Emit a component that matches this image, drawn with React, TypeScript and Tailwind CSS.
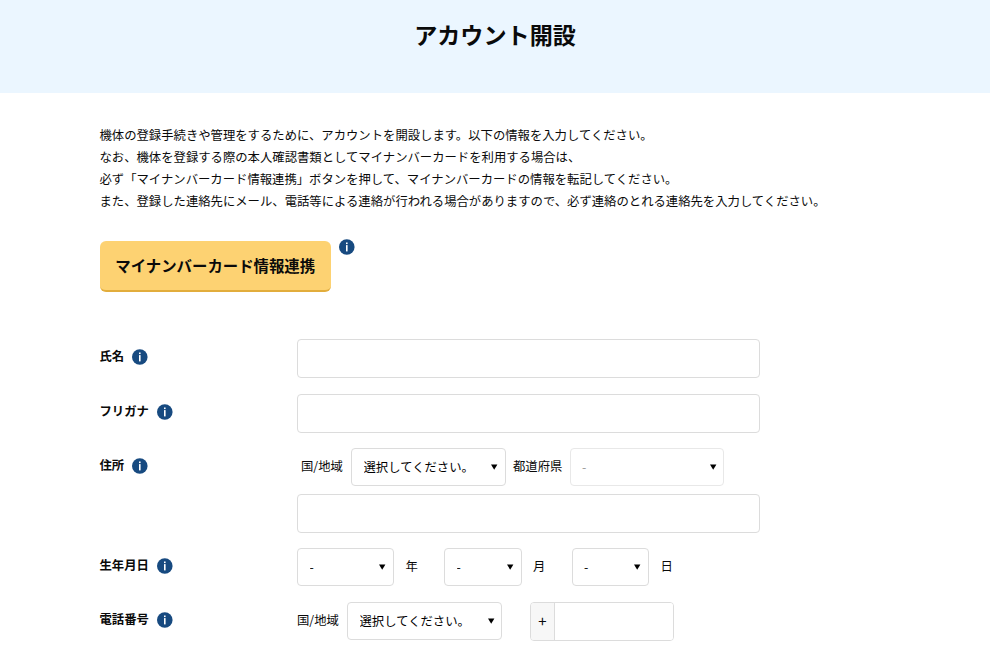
import React from 'react';

interface SelectBoxProps {
  label: string;
  placeholder: string;
  className: string;
  disabled?: boolean;
}

interface FormRowProps {
  label: string;
  className: string;
  children: React.ReactNode;
}

const inputClass = 'block border border-[#dcdcdc] rounded-[4px] bg-white px-3 outline-none';

const InfoIcon: React.FC = () => (
  <svg className="w-4 h-4 shrink-0" viewBox="0 0 16 16" aria-hidden="true">
    <circle cx="7.8" cy="8" r="7.8" fill="#174a80" />
    <rect x="7" y="3.5" width="1.6" height="1.6" fill="#fff" />
    <rect x="7" y="6.1" width="1.6" height="6.3" fill="#fff" />
  </svg>
);

const SelectBox: React.FC<SelectBoxProps> = ({ label, placeholder, className, disabled }) => (
  <div className={`relative shrink-0 ${className}`}>
    <select
      aria-label={label}
      disabled={disabled}
      className="block w-full h-[38px] appearance-none border border-[#dcdcdc] rounded-[4px] bg-white pl-[11.5px] pr-5 text-black disabled:border-[#e8e8e8] disabled:text-[#999] disabled:opacity-100"
    >
      <option>{placeholder}</option>
    </select>
    <svg
      className="absolute right-[7.5px] top-[16px] w-[7px] h-[6px] pointer-events-none"
      viewBox="0 0 7 6"
      aria-hidden="true"
    >
      <path d="M0 0.5h6.4L3.2 5.7z" fill="#000" />
    </svg>
  </div>
);

const FormRow: React.FC<FormRowProps> = ({ label, className, children }) => (
  <div className={`flex items-start ${className}`}>
    <div className="flex w-[197.5px] h-[35px] shrink-0 items-center gap-2 font-bold">
      <span>{label}</span>
      <InfoIcon />
    </div>
    <div>{children}</div>
  </div>
);

const App: React.FC = () => {
  return (
    <div className="h-[649px] overflow-hidden bg-white font-['Noto_Sans_CJK_JP',sans-serif] text-[12.35px] text-[#0a0a0a]">
      <header className="h-[93px] bg-[#ebf6ff] pt-[16px] text-center">
        <h1 className="text-[23.1px] leading-9 font-bold">アカウント開設</h1>
      </header>

      <main className="pl-[99.5px] pt-[30.5px]">
        <p className="leading-[22.2px] whitespace-nowrap">
          機体の登録手続きや管理をするために、アカウントを開設します。以下の情報を入力してください。
          <br />
          なお、機体を登録する際の本人確認書類としてマイナンバーカードを利用する場合は、
          <br />
          必ず「マイナンバーカード情報連携」ボタンを押して、マイナンバーカードの情報を転記してください。
          <br />
          また、登録した連絡先にメール、電話等による連絡が行われる場合がありますので、必ず連絡のとれる連絡先を入力してください。
        </p>

        <div className="mt-[28.5px] flex items-start gap-2">
          <button
            type="button"
            className="w-[231.5px] h-[51px] rounded-[6px] border-b-2 border-[#e2ad3c] bg-[#fdd272] text-[15.4px] font-bold"
          >
            マイナンバーカード情報連携
          </button>
          <div className="-mt-[2px] -ml-[0.5px]">
            <InfoIcon />
          </div>
        </div>

        <form className="mt-[47.2px]">
          <FormRow label="氏名" className="h-[55px]">
            <input aria-label="氏名" className={`${inputClass} w-[463px] h-[39px]`} />
          </FormRow>

          <FormRow label="フリガナ" className="h-[54px]">
            <input aria-label="フリガナ" className={`${inputClass} w-[463px] h-[39px]`} />
          </FormRow>

          <FormRow label="住所" className="h-[100px]">
            <div className="flex items-start pl-1">
              <span className="w-[50px] shrink-0 leading-9">国/地域</span>
              <SelectBox label="国/地域" placeholder="選択してください。" className="w-[154.5px]" />
              <span className="ml-[7.5px] w-[56.5px] shrink-0 leading-9">都道府県</span>
              <SelectBox label="都道府県" placeholder="-" className="w-[154.5px]" disabled />
            </div>
            <input aria-label="住所" className={`${inputClass} mt-2 w-[463px] h-[39px]`} />
          </FormRow>

          <FormRow label="生年月日" className="h-[54px]">
            <div className="flex items-start">
              <SelectBox label="年" placeholder="-" className="w-[96.5px]" />
              <span className="ml-3 w-[38.5px] shrink-0 leading-9">年</span>
              <SelectBox label="月" placeholder="-" className="w-[77.5px]" />
              <span className="ml-[11.5px] w-[38.5px] shrink-0 leading-9">月</span>
              <SelectBox label="日" placeholder="-" className="w-[77px]" />
              <span className="ml-3 leading-9">日</span>
            </div>
          </FormRow>

          <FormRow label="電話番号" className="h-[54px]">
            <div className="flex items-start">
              <span className="w-[50px] shrink-0 leading-9">国/地域</span>
              <SelectBox label="国/地域" placeholder="選択してください。" className="w-[155px]" />
              <div className="ml-7 flex w-[144px] h-[39px] overflow-hidden rounded-[4px] border border-[#dcdcdc]">
                <span className="flex w-6 shrink-0 items-center justify-center border-r border-[#dcdcdc] bg-[#f7f7f7] text-[15px]">
                  +
                </span>
                <input aria-label="電話番号" className="w-full min-w-0 bg-white px-2 outline-none" />
              </div>
            </div>
          </FormRow>
        </form>
      </main>
    </div>
  );
};

export default App;
